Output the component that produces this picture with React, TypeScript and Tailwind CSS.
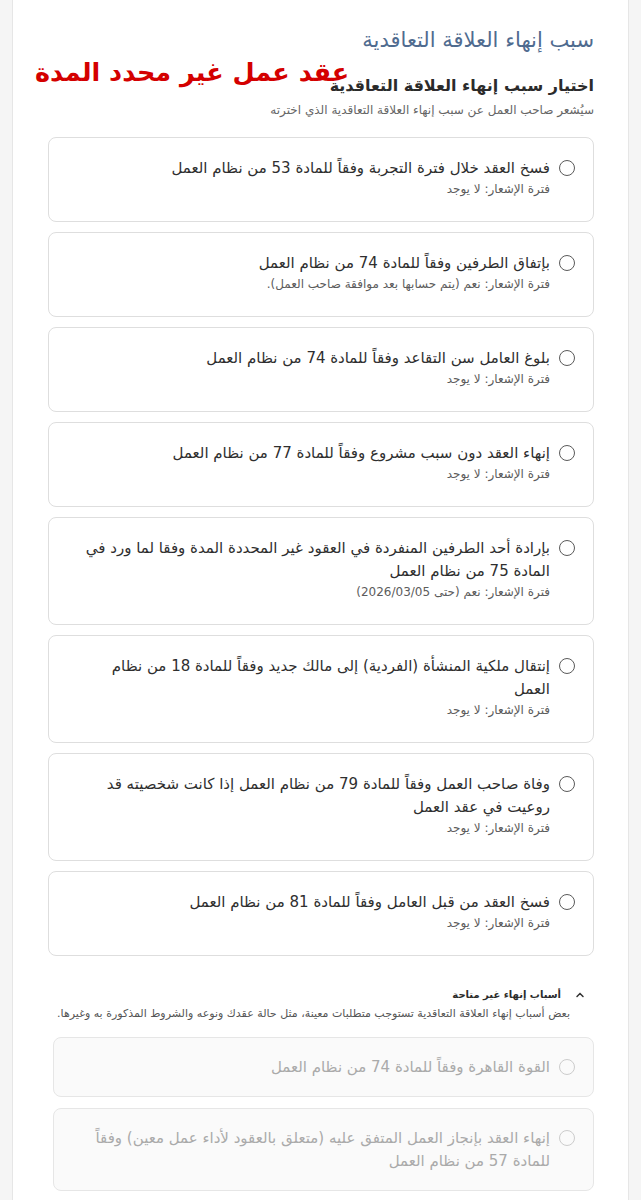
import React from "react";

type Reason = {
  title: string;
  notice?: string;
};

const reasons: Reason[] = [
  { title: "فسخ العقد خلال فترة التجربة وفقاً للمادة 53 من نظام العمل", notice: "فترة الإشعار: لا يوجد" },
  { title: "بإتفاق الطرفين وفقاً للمادة 74 من نظام العمل", notice: "فترة الإشعار: نعم (يتم حسابها بعد موافقة صاحب العمل)." },
  { title: "بلوغ العامل سن التقاعد وفقاً للمادة 74 من نظام العمل", notice: "فترة الإشعار: لا يوجد" },
  { title: "إنهاء العقد دون سبب مشروع وفقاً للمادة 77 من نظام العمل", notice: "فترة الإشعار: لا يوجد" },
  {
    title: "بإرادة أحد الطرفين المنفردة في العقود غير المحددة المدة وفقا لما ورد في المادة 75 من نظام العمل",
    notice: "فترة الإشعار: نعم (حتى 2026/03/05)",
  },
  { title: "إنتقال ملكية المنشأة (الفردية) إلى مالك جديد وفقاً للمادة 18 من نظام العمل", notice: "فترة الإشعار: لا يوجد" },
  {
    title: "وفاة صاحب العمل وفقاً للمادة 79 من نظام العمل إذا كانت شخصيته قد روعيت في عقد العمل",
    notice: "فترة الإشعار: لا يوجد",
  },
  { title: "فسخ العقد من قبل العامل وفقاً للمادة 81 من نظام العمل", notice: "فترة الإشعار: لا يوجد" },
];

const unavailable: Reason[] = [
  { title: "القوة القاهرة وفقاً للمادة 74 من نظام العمل" },
  { title: "إنهاء العقد بإنجاز العمل المتفق عليه (متعلق بالعقود لأداء عمل معين) وفقاً للمادة 57 من نظام العمل" },
];

function Radio({ disabled }: { disabled?: boolean }) {
  return (
    <span
      className={
        disabled
          ? "mt-[3.5px] h-4 w-4 shrink-0 rounded-full border-[1.5px] border-[#cccccc]"
          : "mt-[3.5px] h-4 w-4 shrink-0 rounded-full border-[1.5px] border-[#5a5a5a]"
      }
    />
  );
}

function ReasonCard({ reason }: { reason: Reason }) {
  return (
    <label className="flex cursor-pointer items-start gap-[9px] rounded-lg border border-[#dedede] bg-white pb-[24px] pl-[28px] pr-[18px] pt-[18.5px]">
      <Radio />
      <div className="flex min-w-0 flex-col">
        <span className="text-[15px] leading-[23px] text-[#2f2f2f]">{reason.title}</span>
        <span className="mt-[1.5px] text-[12px] leading-4 text-[#5c5c5c]">{reason.notice}</span>
      </div>
    </label>
  );
}

function DisabledCard({ reason }: { reason: Reason }) {
  return (
    <div className="flex items-start gap-[9px] rounded-lg border border-[#e6e6e6] bg-[#fafafa] py-[17.5px] pl-5 pr-[18px]">
      <Radio disabled />
      <span className="text-[15px] leading-[23px] text-[#aaaaaa]">{reason.title}</span>
    </div>
  );
}

export default function App() {
  return (
    <div
      dir="rtl"
      className="min-h-screen bg-[#f5f5f5] px-3"
      style={{ fontFamily: '"DejaVu Sans", "Noto Sans", sans-serif' }}
    >
      <div className="relative min-h-[1200px] border-x border-[#e6e6e6] bg-white pb-10 pl-[35px] pr-[34px] pt-[27px]">
        <h2 className="text-[21px] leading-[26px] text-[#4f6b8f]">سبب إنهاء العلاقة التعاقدية</h2>

        <span className="absolute left-[22px] top-[50px] text-[25.5px] font-bold leading-[44px] text-[#d40000]">
          عقد عمل غير محدد المدة
        </span>

        <h3 className="mt-[22px] text-[16px] font-bold leading-[22px] text-[#2b2b2b]">اختيار سبب إنهاء العلاقة التعاقدية</h3>
        <p className="mt-[5px] text-[12px] leading-4 text-[#666]">
          سيُشعر صاحب العمل عن سبب إنهاء العلاقة التعاقدية الذي اخترته
        </p>

        <div className="mt-[19px] flex flex-col gap-[10px]">
          {reasons.map((r) => (
            <ReasonCard key={r.title} reason={r} />
          ))}
        </div>

        <div className="ml-[5px] mt-[30px]">
          <div className="flex items-center gap-[14px] pr-[9px]">
            <svg width="10" height="10" viewBox="0 0 10 10" className="shrink-0">
              <path d="M2 6.5 5 3.5 8 6.5" fill="none" stroke="#333" strokeWidth="1.5" strokeLinecap="round" />
            </svg>
            <span className="text-[10px] font-bold leading-[18px] text-[#2b2b2b]">أسباب إنهاء غير متاحة</span>
          </div>
          <p className="mt-[3px] pr-[24px] text-[11px] leading-[14px] text-[#555]">
            بعض أسباب إنهاء العلاقة التعاقدية تستوجب متطلبات معينة، مثل حالة عقدك ونوعه والشروط المذكورة به وغيرها.
          </p>
          <div className="mt-[16px] flex flex-col gap-[11px]">
            {unavailable.map((r) => (
              <DisabledCard key={r.title} reason={r} />
            ))}
          </div>
        </div>
      </div>
    </div>
  );
}
